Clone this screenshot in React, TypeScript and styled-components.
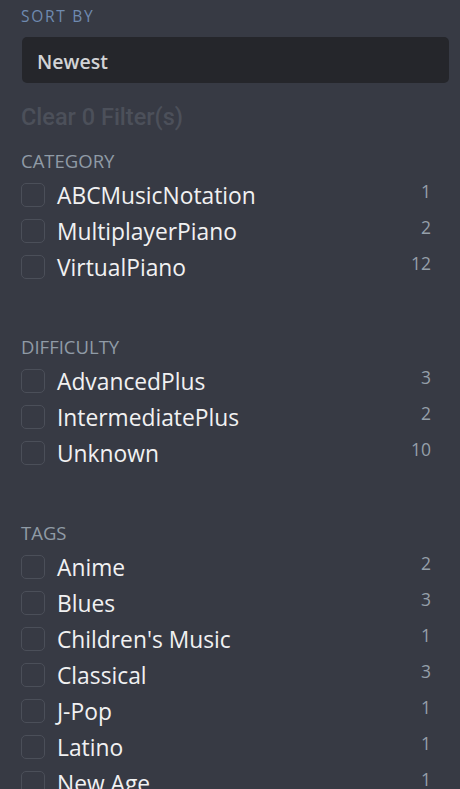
import React from "react";
import styled, { createGlobalStyle } from "styled-components";

const Global = createGlobalStyle`
  html, body {
    margin: 0;
    padding: 0;
    background: #373a44;
  }
  body {
    font-family: "Open Sans", "Noto Sans", sans-serif;
  }
`;

const Panel = styled.div`
  box-sizing: border-box;
  width: 460px;
  height: 789px;
  overflow: hidden;
  padding: 4px 11px 0 21px;
  background: #373a44;
`;

const SortLabel = styled.div`
  font-size: 15.5px;
  line-height: 24px;
  letter-spacing: 1.7px;
  color: #6f8ab0;
  text-transform: uppercase;
`;

const Select = styled.div`
  box-sizing: border-box;
  margin: 9px 0 0 1px;
  height: 46px;
  border-radius: 5px;
  background: #25262b;
  display: flex;
  align-items: center;
  padding: 2px 0 0 15px;
  font-size: 19.5px;
  font-weight: 600;
  color: #d2d3d5;
`;

const ClearButton = styled.div`
  margin-top: 20px;
  font-family: Roboto, "Noto Sans", sans-serif;
  font-size: 23.5px;
  font-weight: 500;
  line-height: 28px;
  color: #4c505a;
`;

const Section = styled.section<{ $first?: boolean }>`
  margin-top: ${(p) => (p.$first ? "18px" : "49px")};
`;

const SectionTitle = styled.div`
  font-size: 18.5px;
  line-height: 24px;
  color: #909ba6;
  text-transform: uppercase;
  margin-bottom: 5px;
`;

const Row = styled.label`
  display: flex;
  align-items: center;
  height: 36px;
  padding-right: 18px;
`;

const Box = styled.span`
  box-sizing: border-box;
  flex: 0 0 24px;
  width: 24px;
  height: 24px;
  border: 1px solid #4b4f59;
  border-radius: 5px;
  margin: -3px 12px 0 0;
`;

const Label = styled.span`
  flex: 1;
  font-size: 22.8px;
  line-height: 36px;
  color: #f1f1f2;
`;

const Count = styled.span`
  align-self: flex-start;
  margin-top: 1px;
  font-size: 17.5px;
  line-height: 24px;
  color: #959fa9;
`;

type Item = [string, number];

const sections: { title: string; items: Item[] }[] = [
  {
    title: "Category",
    items: [
      ["ABCMusicNotation", 1],
      ["MultiplayerPiano", 2],
      ["VirtualPiano", 12],
    ],
  },
  {
    title: "Difficulty",
    items: [
      ["AdvancedPlus", 3],
      ["IntermediatePlus", 2],
      ["Unknown", 10],
    ],
  },
  {
    title: "Tags",
    items: [
      ["Anime", 2],
      ["Blues", 3],
      ["Children's Music", 1],
      ["Classical", 3],
      ["J-Pop", 1],
      ["Latino", 1],
      ["New Age", 1],
    ],
  },
];

export default function App() {
  return (
    <>
      <Global />
      <Panel>
        <SortLabel>Sort by</SortLabel>
        <Select>Newest</Select>
        <ClearButton>Clear 0 Filter(s)</ClearButton>
        {sections.map((s, i) => (
          <Section key={s.title} $first={i === 0}>
            <SectionTitle>{s.title}</SectionTitle>
            {s.items.map(([name, n]) => (
              <Row key={name}>
                <Box />
                <Label>{name}</Label>
                <Count>{n}</Count>
              </Row>
            ))}
          </Section>
        ))}
      </Panel>
    </>
  );
}
